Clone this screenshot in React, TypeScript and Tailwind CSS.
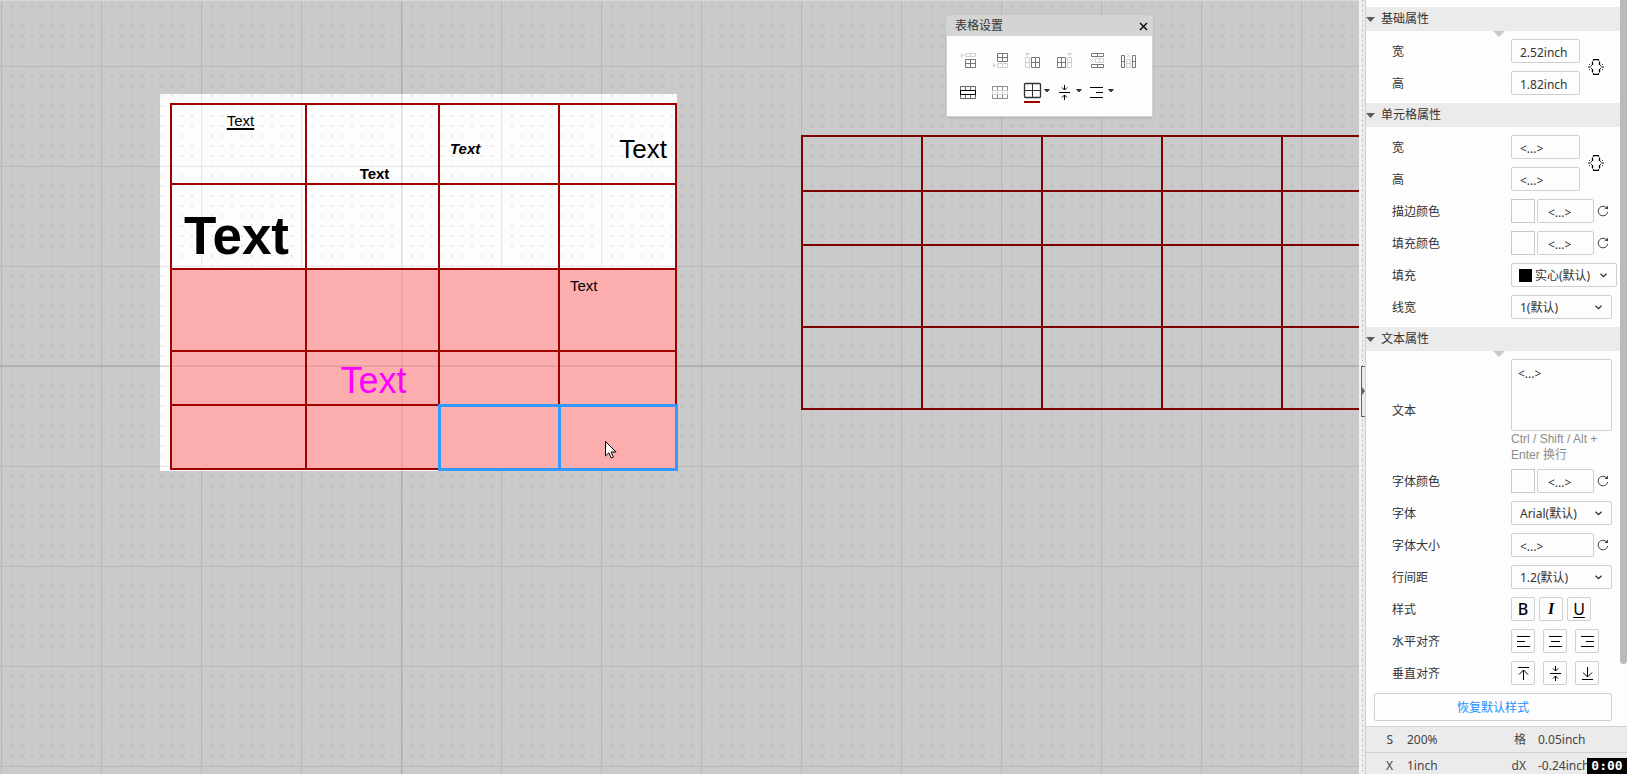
import type { ReactNode } from "react";
import clsx from "clsx";

const DARK = "#777777";
const LIGHT = "#d0d0d0";

function CanvasGrid() {
  return (
    <svg className="absolute inset-0 h-full w-full" aria-hidden="true">
      <defs>
        <pattern id="dots" width="10" height="10" patternUnits="userSpaceOnUse">
          <rect x="1" y="5" width="2" height="2" />
        </pattern>
        <pattern id="lines" width="100" height="100" patternUnits="userSpaceOnUse">
          <path d="M1 0h1v100h-1zM0 66h100v1h-100z" />
        </pattern>
      </defs>
      <g opacity="0.08">
        <rect width="100%" height="100%" fill="url(#dots)" />
        <rect width="100%" height="100%" fill="url(#lines)" />
      </g>
    </svg>
  );
}

function Cell({ className, children }: { className?: string; children?: ReactNode }) {
  return <td className={clsx("border-2 border-[#a00000] leading-none", className)}>{children}</td>;
}

function StyledTable() {
  return (
    <table className="absolute top-[103px] left-[170px] w-[507px] table-fixed border-collapse font-['Liberation_Sans',sans-serif] text-black">
      <colgroup>
        <col className="w-[135px]" />
        <col className="w-[133px]" />
        <col className="w-[120px]" />
        <col className="w-[117px]" />
      </colgroup>
      <tbody>
        <tr className="h-20">
          <Cell className="pt-2 pl-1 text-center align-top text-[15px] underline decoration-2 underline-offset-2">Text</Cell>
          <Cell className="pb-0.5 pl-1 text-center align-bottom text-[15px] font-bold">Text</Cell>
          <Cell className="pt-2 pl-2.5 text-[15px] font-bold italic">Text</Cell>
          <Cell className="pt-2.5 pr-2 text-right text-[26px]">Text</Cell>
        </tr>
        <tr className="h-[85px]">
          <Cell className="pr-1 pb-1.5 text-center align-bottom text-[53px] font-bold">Text</Cell>
          <Cell />
          <Cell />
          <Cell />
        </tr>
        <tr className="h-[82px] bg-[#fcaeae]">
          <Cell />
          <Cell />
          <Cell />
          <Cell className="pt-2 pl-2.5 align-top text-[15px]">Text</Cell>
        </tr>
        <tr className="h-[54px] bg-[#fcaeae]">
          <Cell />
          <Cell className="pt-1.5 pl-0.5 text-center text-[36px] text-[#ff00ff]">Text</Cell>
          <Cell />
          <Cell />
        </tr>
        <tr className="h-16 bg-[#fcaeae]">
          <Cell />
          <Cell />
          <td className="border-3 border-[#3399ff]" />
          <td className="border-3 border-[#3399ff]" />
        </tr>
      </tbody>
    </table>
  );
}

const plainRows = ["h-[55px]", "h-[54px]", "h-[82px]", "h-[82px]"];

function PlainTable() {
  return (
    <table className="absolute top-[135px] left-[801px] w-[602px] table-fixed border-collapse">
      <tbody>
        {plainRows.map((height, i) => (
          <tr key={i} className={height}>
            {[0, 1, 2, 3, 4].map((c) => (
              <td key={c} className="border-2 border-[#800000]" />
            ))}
          </tr>
        ))}
      </tbody>
    </table>
  );
}

function Caret() {
  return <path d="M28.500 13h5v1l-2 2h-1l-2-2z" fill="#333" />;
}

const tools: { label: string; icon: ReactNode }[] = [
  {
    label: "在上方插入行",
    icon: (
      <>
        <path d="M9 9v5l3-2.5z" fill={LIGHT} />
        <path d="M13.5 9.5h10v3h-10zM18.5 9.5v3" stroke={LIGHT} />
        <path d="M13.5 15.5h10v8h-10zM18.5 15.5v8M13.5 19.5h10" stroke={DARK} />
      </>
    ),
  },
  {
    label: "在下方插入行",
    icon: (
      <>
        <path d="M9 19v5l3-2.5z" fill={LIGHT} />
        <path d="M13.5 19.5h10v4h-10zM18.5 19.5v4" stroke={LIGHT} />
        <path d="M13.5 9.5h10v8h-10zM18.5 9.5v8M13.5 13.5h10" stroke={DARK} />
      </>
    ),
  },
  {
    label: "在左侧插入列",
    icon: (
      <>
        <path d="M9 9h5l-2.5 3z" fill={LIGHT} />
        <path d="M9.5 13.5h4v10h-4zM9.5 18.5h4" stroke={LIGHT} />
        <path d="M15.5 13.5h8v10h-8zM19.5 13.5v10M15.5 18.5h8" stroke={DARK} />
      </>
    ),
  },
  {
    label: "在右侧插入列",
    icon: (
      <>
        <path d="M19 9h5l-2.5 3z" fill={LIGHT} />
        <path d="M19.5 13.5h4v10h-4zM19.5 18.5h4" stroke={LIGHT} />
        <path d="M9.5 13.5h8v10h-8zM13.5 13.5v10M9.5 18.5h8" stroke={DARK} />
      </>
    ),
  },
  {
    label: "删除行",
    icon: (
      <>
        <path d="M9.5 14.5l4 4M13.5 14.5l-4 4M15.5 14.5h8v4h-8zM19.5 14.5v4" stroke={LIGHT} />
        <path d="M11.5 9.5h12v3h-12zM17.5 9.5v3M11.5 20.5h12v3h-12zM17.5 20.5v3" stroke={DARK} />
      </>
    ),
  },
  {
    label: "删除列",
    icon: (
      <>
        <path d="M14.5 9.5l4 4M18.5 9.5l-4 4M14.5 15.5h4v8h-4zM14.5 19.5h4" stroke={LIGHT} />
        <path d="M9.5 11.5h3v12h-3zM9.5 17.5h3M20.5 11.5h3v12h-3zM20.5 17.5h3" stroke={DARK} />
      </>
    ),
  },
  {
    label: "合并单元格",
    icon: (
      <>
        <path d="M8.5 10.5h15v12h-15zM13.5 10.5v4M18.5 10.5v4M13.5 18.5v4M18.5 18.5v4" stroke="#666" />
        <path d="M8.5 14.5h15v4h-15z" stroke="#000" />
      </>
    ),
  },
  {
    label: "拆分单元格",
    icon: (
      <>
        <path d="M8.5 14.5h15M8.5 18.5h15" stroke={LIGHT} />
        <path d="M8.5 14.5v-4h15v4M8.5 18.5v4h15v-4M13.5 10.5v4M18.5 10.5v4M13.5 18.5v4M18.5 18.5v4" stroke="#8a8a8a" />
        <path d="M8.5 14.5v4M13.5 14.5v4M18.5 14.5v4M23.5 14.5v4" stroke={LIGHT} />
      </>
    ),
  },
  {
    label: "边框",
    icon: (
      <>
        <rect x="8.5" y="7.5" width="16" height="14" rx="1" stroke="#333" strokeWidth="1.3" />
        <path d="M16.5 8v13M9 14.5h15" stroke="#333" />
        <path d="M8 25h16v2h-16z" fill="#a00000" />
        <Caret />
      </>
    ),
  },
  {
    label: "垂直对齐方式",
    icon: (
      <>
        <path d="M11 16.5h11M16.5 9v5M14 11.5l2.5 2.5 2.5-2.5M16.5 24v-5M14 21.5l2.5-2.5 2.5 2.5" stroke="#000" />
        <Caret />
      </>
    ),
  },
  {
    label: "水平对齐方式",
    icon: (
      <>
        <path d="M10 11.5h13M16 16.5h7M10 21.5h13" stroke="#000" />
        <Caret />
      </>
    ),
  },
];

function TableDialog() {
  return (
    <section className="absolute top-[15px] left-[946px] w-[207px] overflow-hidden rounded-t border border-[#d4d4d4] bg-[#fdfdfd] shadow-sm">
      <header className="flex h-5 items-center justify-between bg-[#d4d4d4] pr-1 pl-2">
        <h2>表格设置</h2>
        <button aria-label="关闭">
          <svg width="9" height="9" viewBox="0 0 9 9" fill="none" stroke="#000" strokeWidth="1.4">
            <path d="M1 1l7 7M8 1l-7 7" />
          </svg>
        </button>
      </header>
      <div className="flex flex-wrap py-2 pr-2 pl-[5px]">
        {tools.map((tool) => (
          <button key={tool.label} aria-label={tool.label} className="h-8 w-8">
            <svg className="overflow-visible" width="32" height="32" viewBox="0 0 32 32" fill="none">
              {tool.icon}
            </svg>
          </button>
        ))}
      </div>
    </section>
  );
}

const box = "h-6 rounded-xs border border-[#d0d0d0] bg-[#fdfdfd]";

function SectionHeader({ title, notch }: { title: string; notch?: boolean }) {
  return (
    <header className="relative flex h-6 items-center gap-1.5 bg-[#ebebeb]">
      <svg width="9" height="5" viewBox="0 0 9 5">
        <path d="M0 0h9l-4.5 5z" fill="#5c5c5c" />
      </svg>
      <h2>{title}</h2>
      {notch && (
        <svg className="absolute top-full left-1/2" width="12" height="6" viewBox="0 0 12 6">
          <path d="M0 0h12l-6 6z" fill="#cacaca" />
        </svg>
      )}
    </header>
  );
}

function Row({ label, id, children }: { label: string; id?: string; children: ReactNode }) {
  return (
    <div className="flex items-center pl-[26px]">
      {id ? (
        <label htmlFor={id} className="w-[119px] shrink-0 pt-0.5">
          {label}
        </label>
      ) : (
        <span className="w-[119px] shrink-0 pt-0.5">{label}</span>
      )}
      {children}
    </div>
  );
}

function RefreshButton() {
  return (
    <button aria-label="重置" className="ml-[3px]">
      <svg width="12" height="12" viewBox="0 0 12 12" fill="none" stroke="#444">
        <path d="M9.7 3A4.8 4.8 0 1 0 10.7 7" />
        <path d="M11 0.5v3.5h-3.5z" fill="#444" stroke="none" />
      </svg>
    </button>
  );
}

function ColorRow({ label, id }: { label: string; id: string }) {
  return (
    <Row label={label} id={id}>
      <button aria-label={`选择${label}`} className="mr-0.5 h-6 w-6 border border-[#c8c8c8]" />
      <input id={id} defaultValue="<...>" className={clsx(box, "w-[57px] px-2.5 pt-0.5")} />
      <RefreshButton />
    </Row>
  );
}

function SelectRow({ label, id, value, swatch }: { label: string; id: string; value: string; swatch?: boolean }) {
  return (
    <Row label={label} id={id}>
      <div className={clsx("relative", swatch ? "w-[106px]" : "w-[101px]")}>
        <select id={id} className={clsx(box, "w-full appearance-none pt-0.5", swatch ? "pl-[23px]" : "pl-2")}>
          <option>{value}</option>
        </select>
        {swatch && <span className="absolute top-1.5 left-2 h-[13px] w-[13px] bg-black" />}
        <svg className="pointer-events-none absolute top-2.5 right-2.5" width="7" height="5" viewBox="0 0 7 5" fill="none" stroke="#333" strokeWidth="1.3">
          <path d="M0.5 0.7l3 3 3-3" />
        </svg>
      </div>
    </Row>
  );
}

function SizePair({ prefix, width, height }: { prefix: string; width: string; height: string }) {
  return (
    <div className="flex items-center">
      <div className="flex flex-col gap-2">
        <Row label="宽" id={`${prefix}-w`}>
          <input id={`${prefix}-w`} defaultValue={width} className={clsx(box, "w-[69px] px-2 pt-0.5")} />
        </Row>
        <Row label="高" id={`${prefix}-h`}>
          <input id={`${prefix}-h`} defaultValue={height} className={clsx(box, "w-[69px] px-2 pt-0.5")} />
        </Row>
      </div>
      <button aria-label="锁定宽高比" className="ml-2">
        <svg width="16" height="16" viewBox="0 0 16 16" fill="none" stroke="#000">
          <path d="M4.5 6V2.5M5 1.5l1-1h4l1 1M11.500 2.5V6M4.5 10v3.5M5 14.5l1 1h4l1-1M11.500 10v3.500" strokeWidth="1.3" />
          <path d="M0 8h3M13 8h3" stroke="#888" strokeWidth="2" />
          <path d="M1 5.5h1M3 6.5h1M14 5.5h1M12 6.5h1M1 10.5h1M3 9.5h1M14 10.5h1M12 9.5h1" stroke="#333" />
        </svg>
      </button>
    </div>
  );
}

const alignIcons = [
  { label: "左对齐", d: "M6 7.5h13M6 12.5h8M6 17.5h13" },
  { label: "水平居中", d: "M6 7.5h13M8 12.5h9M6 17.5h13" },
  { label: "右对齐", d: "M6 7.5h13M11 12.5h8M6 17.5h13" },
];

const valignIcons = [
  { label: "顶端对齐", d: "M7 6.5h11M12.5 19v-10M8 13.5l4.5-4.5 4.5 4.5" },
  { label: "垂直居中", d: "M7 12.5h11M12.5 5v5M10 7.5l2.5 2.5 2.5-2.5M12.5 20v-5M10 17.5l2.5-2.5 2.5 2.5" },
  { label: "底端对齐", d: "M7 18.5h11M12.5 6v10M8 11.5l4.5 4.5 4.5-4.5" },
];

function IconButtons({ items }: { items: { label: string; d: string }[] }) {
  return (
    <div className="flex gap-2">
      {items.map((item) => (
        <button key={item.label} aria-label={item.label} className={clsx(box, "w-6")}>
          <svg width="22" height="22" viewBox="1 1 22 22" fill="none" stroke="#000">
            <path d={item.d} />
          </svg>
        </button>
      ))}
    </div>
  );
}

function Properties() {
  return (
    <div className="min-w-0 flex-1 pt-[7px]">
      <SectionHeader title="基础属性" notch />
      <div className="py-2">
        <SizePair prefix="base" width="2.52inch" height="1.82inch" />
      </div>

      <SectionHeader title="单元格属性" />
      <div className="flex flex-col gap-2 py-2">
        <SizePair prefix="cell" width="<...>" height="<...>" />
        <ColorRow label="描边颜色" id="stroke" />
        <ColorRow label="填充颜色" id="fill" />
        <SelectRow label="填充" id="fill-style" value="实心(默认)" swatch />
        <SelectRow label="线宽" id="line-width" value="1(默认)" />
      </div>

      <SectionHeader title="文本属性" notch />
      <div className="flex flex-col gap-2 py-2">
        <Row label="文本" id="text">
          <div className="-mb-0.5 w-[101px]">
            <textarea
              id="text"
              defaultValue="<...>"
              className="block h-[72px] w-full resize-none rounded-xs border border-[#d0d0d0] bg-[#fdfdfd] p-1.5"
            />
            <p className="font-['Liberation_Sans','Noto_Sans_CJK_SC',sans-serif] leading-4 text-[#8c8c8c]">
              Ctrl / Shift / Alt + Enter 换行
            </p>
          </div>
        </Row>
        <ColorRow label="字体颜色" id="font-color" />
        <SelectRow label="字体" id="font" value="Arial(默认)" />
        <Row label="字体大小" id="font-size">
          <input id="font-size" defaultValue="<...>" className={clsx(box, "w-[83px] px-2 pt-0.5")} />
          <RefreshButton />
        </Row>
        <SelectRow label="行间距" id="line-height" value="1.2(默认)" />
        <Row label="样式">
          <div className="flex gap-1 text-base leading-none text-black">
            <button aria-label="粗体" className={clsx(box, "w-6 font-medium")}>B</button>
            <button aria-label="斜体" className={clsx(box, "w-6 font-['Liberation_Serif',serif] font-bold italic")}>I</button>
            <button aria-label="下划线" className={clsx(box, "w-6 underline underline-offset-2")}>U</button>
          </div>
        </Row>
        <Row label="水平对齐">
          <IconButtons items={alignIcons} />
        </Row>
        <Row label="垂直对齐">
          <IconButtons items={valignIcons} />
        </Row>
        <button className="mx-2 h-7 rounded-xs border border-[#d0d0d0] pt-0.5 text-[#1e8fff]">恢复默认样式</button>
      </div>
    </div>
  );
}

function StatusRow({ items }: { items: string[] }) {
  return (
    <div className="grid h-[26px] shrink-0 grid-cols-[27px_95px_40px_1fr] items-center border-t border-[#cfcfcf] text-[#444]">
      <span className="text-right">{items[0]}</span>
      <span className="pl-3.5">{items[1]}</span>
      <span className="pr-0.5 text-right">{items[2]}</span>
      <span className="pl-2.5">{items[3]}</span>
    </div>
  );
}

function Splitter() {
  return (
    <div className="flex w-[7px] shrink-0 items-center justify-end border-r border-l-2 border-r-[#cfcfcf] border-l-[#f4f4f4] bg-[#ebebeb] bg-[repeating-linear-gradient(#aaa_0_1px,#ebebeb_1px_5px)] bg-[size:1px_100%] bg-[position:1px_0] bg-no-repeat pt-2">
      <button aria-label="收起面板" className="flex h-[51px] w-1 items-center border border-r-0 border-[#6b6060] bg-[#ebebeb]">
        <svg width="3" height="8" viewBox="0 0 3 8">
          <path d="M0 0l3 4-3 4z" fill="#6b6060" />
        </svg>
      </button>
    </div>
  );
}

export default function App() {
  return (
    <div className="relative flex h-screen overflow-hidden bg-[#cacaca] font-['Noto_Sans','Noto_Sans_CJK_SC',sans-serif] text-xs text-[#333]">
      <main className="relative min-w-0 flex-1 overflow-hidden border-t border-[#d8d8d8]">
        <div className="absolute -top-px left-0 h-screen w-full">
          <div className="absolute top-[94px] left-[160px] h-[377px] w-[517px] bg-[#fdfdfd]" />
          <CanvasGrid />
          <StyledTable />
          <PlainTable />
          <div className="absolute inset-y-0 left-[401px] w-0.5 bg-black/5" />
          <div className="absolute inset-x-0 top-[365px] h-0.5 bg-black/8" />
          <svg className="absolute top-[441px] left-[605px]" width="13" height="18" viewBox="0 0 13 18">
            <path d="M0.5 0.5v14.5l3.4-3.2 2.3 5.2 2.2-1-2.3-5h5z" fill="#fff" stroke="#000" />
          </svg>
          <TableDialog />
        </div>
      </main>

      <Splitter />

      <aside className="flex w-[261px] shrink-0 flex-col bg-[#fdfdfd]">
        <div className="flex min-h-0 flex-1 overflow-hidden">
          <Properties />
          <div className="w-[7px] shrink-0">
            <div className="h-[664px] rounded-b bg-[#bababa]" />
          </div>
        </div>
        <footer className="flex h-12 shrink-0 flex-col overflow-hidden bg-[#ebebeb]">
          <StatusRow items={["S", "200%", "格", "0.05inch"]} />
          <StatusRow items={["X", "1inch", "dX", "-0.24inch"]} />
        </footer>
      </aside>

      <time className="absolute right-0 bottom-0 h-4 w-10 bg-black text-center font-['DejaVu_Sans_Mono',monospace] text-[13px] leading-4 font-bold text-white">
        0:00
      </time>
    </div>
  );
}
